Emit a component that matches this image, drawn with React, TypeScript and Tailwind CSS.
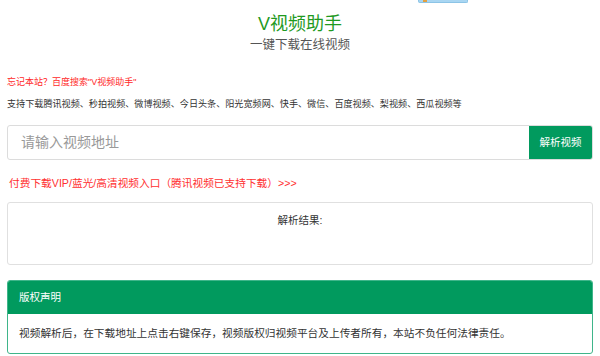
import React from "react";

export default function App() {
  return (
    <div
      className="relative w-[600px] h-[356px] bg-white overflow-hidden"
      style={{ fontFamily: '"Liberation Sans", "Noto Sans CJK SC", sans-serif' }}
    >
      <div className="absolute left-[418px] top-0 w-[50px] h-[3px] bg-[#a9d6f2] border-x border-b border-[#8cc4e6] rounded-b-[2px]">
        <div className="ml-[4px] w-[4px] h-[2px] bg-[#e3a040]" />
      </div>

      <div className="px-[7px]">
        <div className="flex flex-col items-center pt-[12px]">
          <div className="text-[18px] leading-[24px] text-[#1f9a1f]">V视频助手</div>
          <div className="text-[12.5px] leading-[18px] text-[#555]">一键下载在线视频</div>
        </div>

        <div className="mt-[21px] text-[9px] leading-[14px] text-[#ff2a2a]">
          忘记本站？百度搜索"V视频助手"
        </div>
        <div className="mt-[8px] text-[9.1px] leading-[14px] text-[#333]">
          支持下载腾讯视频、秒拍视频、微博视频、今日头条、阳光宽频网、快手、微信、百度视频、梨视频、西瓜视频等
        </div>

        <div className="mt-[14px] flex h-[35px] border border-[#dcdcdc] rounded-[3px] overflow-hidden">
          <div className="flex-1 flex items-center pl-[13px] text-[14px] text-[#999]">请输入视频地址</div>
          <div className="w-[63px] bg-[#019a5e] flex items-center justify-center text-[10.5px] text-white">
            解析视频
          </div>
        </div>

        <div className="mt-[16px] pl-[2px] text-[10.7px] leading-[14px] text-[#ff3030]">
          付费下载VIP/蓝光/高清视频入口（腾讯视频已支持下载）&gt;&gt;&gt;
        </div>

        <div className="mt-[12px] h-[63px] border border-[#e0e0e0] rounded-[3px] flex justify-center pt-[10px]">
          <div className="text-[10.5px] leading-[14px] text-[#333]">解析结果:</div>
        </div>

        <div className="mt-[15px] border border-[#3fb58a] rounded-[3px] overflow-hidden">
          <div className="h-[33px] bg-[#019a5e] flex items-center pl-[11px] text-[10.5px] text-white">
            版权声明
          </div>
          <div className="h-[39px] flex items-center pl-[11px] text-[10.7px] text-[#333]">
            视频解析后，在下载地址上点击右键保存，视频版权归视频平台及上传者所有，本站不负任何法律责任。
          </div>
        </div>
      </div>
    </div>
  );
}
